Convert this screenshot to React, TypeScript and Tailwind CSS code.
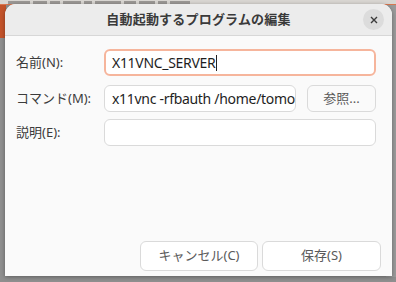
import React from 'react';

const font = { fontFamily: '"Noto Sans", "Noto Sans CJK JP", sans-serif' };

const Field = ({ value, focused, caret, className = '' }: { value?: string; focused?: boolean; caret?: boolean; className?: string }) => (
  <div
    className={`h-[27px] flex items-center rounded-[6px] bg-white overflow-hidden whitespace-nowrap text-[14px] text-[#1e1e1e] ${
      focused ? 'border-2 border-[#f6b59c] px-[6px]' : 'border border-[#dadada] px-[7px]'
    } ${className}`}
  >
    <span className="tracking-[-0.3px]">{value}</span>
    {caret && <span className="inline-block w-px h-[16px] bg-[#222]" />}
  </div>
);

export default function App() {
  return (
    <div className="relative w-[396px] h-[282px] overflow-hidden bg-[#8f8f8f]" style={font}>
      {/* window behind the dialog */}
      <div className="absolute left-0 top-0 w-[396px] h-[5px] bg-[#d9d6d2] border-b border-[#d8764f] flex items-start gap-[3px] pl-[8px] pt-[1px]">
        {[22, 14, 10, 18, 8, 26, 12, 16, 9, 20].map((w, i) => (
          <div key={i} className="h-[3px] bg-[#9b9895] blur-[0.5px]" style={{ width: w }} />
        ))}
      </div>
      <div className="absolute left-0 top-[5px] w-[6px] h-[33px] bg-[#c3532a]" />
      <div className="absolute left-[386px] top-[5px] w-[10px] h-[272px] bg-[#9a9a9a]" />

      {/* dialog */}
      <div className="absolute left-[5px] top-[4px] w-[387px] h-[272px] rounded-t-[11px] bg-[#fafafa] flex flex-col overflow-hidden shadow-[0_1px_4px_rgba(0,0,0,0.35)]">
        <div className="relative h-[32px] shrink-0 flex items-center justify-center bg-[#ececec] border-b border-[#d7d7d7]">
          <span className="text-[13px] font-bold text-[#3a3a3a] tracking-[0.2px]">自動起動するプログラムの編集</span>
          <button className="absolute right-[8px] top-[5px] w-[21px] h-[21px] rounded-full bg-[#dcdcdc] flex items-center justify-center">
            <svg width="8" height="8" viewBox="0 0 8 8">
              <path d="M1 1L7 7M7 1L1 7" stroke="#3b3b3b" strokeWidth="1.4" />
            </svg>
          </button>
        </div>

        <div className="flex-1 flex flex-col pl-[11px] pr-[16px] pt-[13px]">
          <div className="flex items-center">
            <span className="w-[88px] text-[13px] text-[#3c3c3c]">名前(N):</span>
            <Field value="X11VNC_SERVER" focused caret className="flex-1" />
          </div>
          <div className="flex items-center mt-[9px]">
            <span className="w-[88px] text-[13px] text-[#3c3c3c]">コマンド(M):</span>
            <Field value="x11vnc -rfbauth /home/tomori" className="w-[192px] text-[13.5px]" />
            <button className="ml-[11px] flex-1 h-[27px] rounded-[6px] border border-[#dadada] bg-[#fafafa] text-[13px] text-[#5a5a5a]">
              参照...
            </button>
          </div>
          <div className="flex items-center mt-[7px]">
            <span className="w-[88px] text-[13px] text-[#3c3c3c]">説明(E):</span>
            <Field className="flex-1" />
          </div>

          <div className="flex-1" />
          <div className="flex justify-end gap-[4px] mr-[-5px] mb-[5px]">
            <button className="w-[118px] h-[30px] rounded-[6px] border border-[#dadada] bg-white text-[13px] text-[#5a5a5a]">
              キャンセル(C)
            </button>
            <button className="w-[119px] h-[30px] rounded-[6px] border border-[#dadada] bg-white text-[13px] text-[#5a5a5a]">
              保存(S)
            </button>
          </div>
        </div>
      </div>
    </div>
  );
}
